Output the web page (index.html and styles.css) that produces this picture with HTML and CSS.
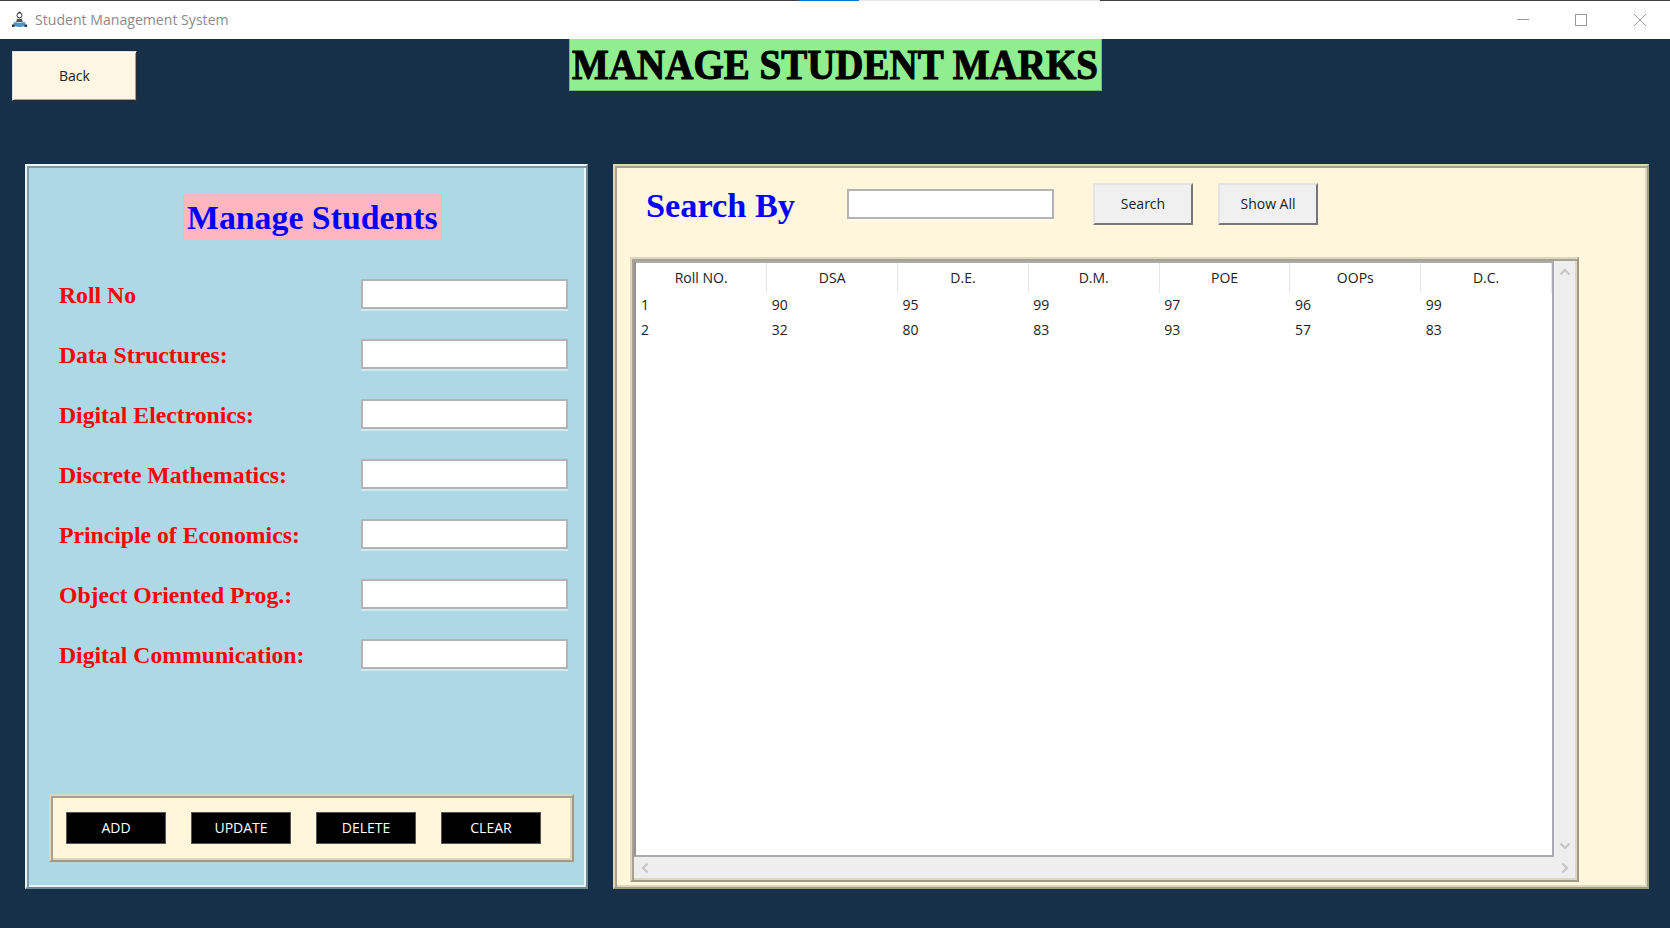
FILE: index.html
```html
<!DOCTYPE html>
<html lang="en">
<head>
    <meta charset="UTF-8">
    <title>Student Management System</title>
    <link rel="stylesheet" href="styles.css">
</head>
<body>
    <div class="topline">
        <span class="topline-blue"></span>
        <span class="topline-grey"></span>
    </div>
    <header class="titlebar">
        <svg class="app-icon" width="15" height="17" viewBox="0 0 18 20">
            <circle cx="9" cy="5" r="3" fill="#fff" stroke="#333" stroke-width="1.2"/>
            <path d="M7 1.6 L9 .4 L11 1.6 L9 2.6 Z" fill="#333"/>
            <path d="M6 9 H12 L13 13 H5 Z" fill="#555"/>
            <path d="M2 13 L9 14 L16 13 V18 L9 19 L2 18 Z" fill="#4d94d0"/>
            <path d="M0 16 H3 V19 H0 Z M15 16 H18 V19 H15 Z" fill="#333"/>
        </svg>
        <span class="app-name">Student Management System</span>
        <div class="win-controls">
            <svg class="win-btn" width="12" height="12" viewBox="0 0 12 12"><path d="M0 5.5 H12" stroke="#999" fill="none"/></svg>
            <svg class="win-btn" width="12" height="12" viewBox="0 0 12 12"><rect x=".5" y=".5" width="11" height="11" stroke="#999" fill="none"/></svg>
            <svg class="win-btn win-close" width="12" height="12" viewBox="0 0 12 12"><path d="M0 0 L12 12 M12 0 L0 12" stroke="#999" fill="none"/></svg>
        </div>
    </header>

    <main class="window">
        <div class="top-row">
            <div class="top-left"><button class="back-btn">Back</button></div>
            <h1 class="page-title"><span>MANAGE STUDENT MARKS</span></h1>
        </div>

        <div class="panels">
            <section class="panel-manage">
                <h2 class="manage-title">Manage Students</h2>
                <form class="marks-form">
                    <div class="form-row"><label for="roll">Roll No</label><input id="roll" type="text"></div>
                    <div class="form-row"><label for="dsa">Data Structures:</label><input id="dsa" type="text"></div>
                    <div class="form-row"><label for="de">Digital Electronics:</label><input id="de" type="text"></div>
                    <div class="form-row"><label for="dm">Discrete Mathematics:</label><input id="dm" type="text"></div>
                    <div class="form-row"><label for="poe">Principle of Economics:</label><input id="poe" type="text"></div>
                    <div class="form-row"><label for="oop">Object Oriented Prog.:</label><input id="oop" type="text"></div>
                    <div class="form-row"><label for="dc">Digital Communication:</label><input id="dc" type="text"></div>
                </form>
                <div class="action-box">
                    <button class="action-btn">ADD</button>
                    <button class="action-btn">UPDATE</button>
                    <button class="action-btn">DELETE</button>
                    <button class="action-btn">CLEAR</button>
                </div>
            </section>

            <section class="panel-list">
                <div class="search-row">
                    <span class="search-label">Search By</span>
                    <input class="search-input" type="text">
                    <button class="search-btn">Search</button>
                    <button class="search-btn show-all">Show All</button>
                </div>
                <div class="table-frame">
                    <div class="tree">
                        <table class="marks-table">
                            <thead>
                                <tr><th>Roll NO.</th><th>DSA</th><th>D.E.</th><th>D.M.</th><th>POE</th><th>OOPs</th><th>D.C.</th></tr>
                            </thead>
                            <tbody>
                                <tr><td>1</td><td>90</td><td>95</td><td>99</td><td>97</td><td>96</td><td>99</td></tr>
                                <tr><td>2</td><td>32</td><td>80</td><td>83</td><td>93</td><td>57</td><td>83</td></tr>
                            </tbody>
                        </table>
                    </div>
                    <div class="vbar">
                        <svg width="12" height="8" viewBox="0 0 12 8"><path d="M1.5 6.5 L6 2 L10.5 6.5" stroke="#c4c4c4" stroke-width="2" fill="none"/></svg>
                        <svg width="12" height="8" viewBox="0 0 12 8"><path d="M1.5 1.5 L6 6 L10.5 1.5" stroke="#c4c4c4" stroke-width="2" fill="none"/></svg>
                    </div>
                    <div class="hbar">
                        <svg width="8" height="12" viewBox="0 0 8 12"><path d="M6.5 1.5 L2 6 L6.5 10.5" stroke="#c4c4c4" stroke-width="2" fill="none"/></svg>
                    </div>
                    <div class="bar-corner">
                        <svg width="8" height="12" viewBox="0 0 8 12"><path d="M1.5 1.5 L6 6 L1.5 10.5" stroke="#c4c4c4" stroke-width="2" fill="none"/></svg>
                    </div>
                </div>
            </section>
        </div>
    </main>
</body>
</html>
```

FILE: styles.css
```css
* {
    box-sizing: border-box;
}

html, body {
    margin: 0;
    height: 100%;
}

body {
    display: flex;
    flex-direction: column;
    width: 1670px;
    height: 928px;
    overflow: hidden;
    background-color: #173049;
    font-family: "Open Sans", "Noto Sans", sans-serif;
}

button {
    font-family: "Open Sans", "Noto Sans", sans-serif;
    font-size: 14px;
    padding: 0 0 2px;
}

/* title bar */
.topline {
    display: flex;
    height: 1px;
    padding-left: 799px;
    background-color: #404040;
}

.topline-blue {
    width: 60px;
    background-color: #0078d7;
}

.topline-grey {
    width: 241px;
    background-color: #e6e6e6;
}

.titlebar {
    display: flex;
    align-items: center;
    height: 38px;
    padding: 0 0 1px 12px;
    background-color: #fff;
}

.app-name {
    margin-left: 8px;
    font-size: 14.1px;
    color: #8b8b8b;
}

.win-controls {
    display: flex;
    gap: 46px;
    margin-left: auto;
    padding-right: 24px;
}

.win-close {
    margin-left: 1px;
}

/* top row */
.window {
    display: flex;
    flex-direction: column;
    flex: 1;
}

.top-row {
    display: grid;
    grid-template-columns: 1fr auto 1fr;
    height: 125px;
}

.top-left {
    padding: 12px 0 0 12px;
}

.back-btn {
    width: 125px;
    height: 50px;
    background-color: #fdf6e3;
    color: #222;
    border: 1px solid;
    border-color: #ddd #2e2e2e #2e2e2e #ddd;
    box-shadow: inset 1px 1px 0 #fff, inset -1px -1px 0 #a5a294;
}

.page-title {
    width: 533px;
    height: 52px;
    margin: 0;
    text-align: center;
    background-color: #90ee90;
    border: 1px solid #6dbd78;
    border-top-width: 0;
    font-family: "Liberation Serif", serif;
    font-size: 39px;
    font-weight: bold;
    line-height: 52px;
    color: #000;
    -webkit-text-stroke: 1px #000;
    white-space: nowrap;
}

.page-title span {
    display: inline-block;
    transform: scaleY(1.06);
}

/* panels */
.panels {
    display: flex;
    gap: 25px;
    height: 725px;
    padding-left: 25px;
}

.panel-manage {
    display: flex;
    flex-direction: column;
    width: 563px;
    background-color: #add8e6;
    border: 2px solid;
    border-color: #e9f6fa #708a94 #708a94 #e9f6fa;
    box-shadow: inset 2px 2px 0 #7f9aa3, inset -2px -2px 0 #e9f6fa;
}

.manage-title {
    align-self: flex-start;
    margin: 28px 0 0 156px;
    padding: 0 4px;
    height: 46px;
    background-color: #ffb6c1;
    font-family: "Liberation Serif", serif;
    font-size: 33.8px;
    font-weight: bold;
    line-height: 48px;
    color: #00f;
    white-space: nowrap;
}

.marks-form {
    display: flex;
    flex-direction: column;
    gap: 30px;
    margin-top: 39px;
    padding: 0 18px 0 32px;
}

.form-row {
    display: flex;
    align-items: center;
    justify-content: space-between;
    height: 30px;
}

.form-row label {
    padding-top: 2px;
    font-family: "Liberation Serif", serif;
    font-size: 23.7px;
    font-weight: bold;
    color: #f00;
}

.form-row input, .search-input {
    width: 207px;
    height: 30px;
    background-color: #fff;
    border: 2px solid #b4b4b4;
    box-shadow: 0 2px 0 rgba(255, 255, 255, .45);
    outline: none;
}

.action-box {
    display: flex;
    gap: 25px;
    height: 68px;
    margin: auto 12px 25px 22px;
    padding: 16px 0 0 15px;
    background-color: #fff6db;
    border: 2px solid;
    border-color: #ddd7bf #a09b87 #a09b87 #ddd7bf;
    box-shadow: inset 2px 2px 0 #a8a390, inset -2px -2px 0 #ddd7bf;
}

.action-btn {
    width: 100px;
    height: 32px;
    background-color: #000;
    color: #fff;
    border: 1px solid #555;
}

.panel-list {
    display: flex;
    flex-direction: column;
    width: 1036px;
    background-color: #fff6db;
    border: 2px solid;
    border-color: #ddd7bf #a09b87 #a09b87 #ddd7bf;
    box-shadow: inset 2px 2px 0 #a8a390, inset -2px -2px 0 #ddd7bf;
}

.search-row {
    display: flex;
    align-items: center;
    height: 46px;
    margin-top: 15px;
    padding-left: 31px;
}

.search-label {
    width: 201px;
    padding-top: 2px;
    font-family: "Liberation Serif", serif;
    font-size: 34.3px;
    font-weight: bold;
    color: #00f;
}

.search-btn {
    width: 100px;
    height: 42px;
    margin-left: 39px;
    background-color: #f0f0f0;
    color: #222;
    border: 2px solid;
    border-color: #e4e4e4 #777 #777 #e4e4e4;
}

.show-all {
    margin-left: 25px;
}

/* table */
.table-frame {
    display: grid;
    grid-template-columns: 920px 21px;
    grid-template-rows: 596px 21px;
    width: 949px;
    height: 625px;
    margin: 30px 0 0 15px;
    background-color: #eee;
    border: 2px solid;
    border-color: #ddd7bf #a09b87 #a09b87 #ddd7bf;
    box-shadow: inset 2px 2px 0 #a8a390, inset -2px -2px 0 #ddd7bf;
    padding: 2px;
}

.tree {
    background-color: #fff;
    border: 2px solid #a9abb0;
    border-left-color: #8f9196;
}

.marks-table {
    width: 916px;
    table-layout: fixed;
    border-collapse: collapse;
    font-size: 14px;
    color: #222;
}

.marks-table th {
    height: 30px;
    padding: 0 0 2px;
    font-weight: normal;
    border-right: 1px solid #e5e5e5;
}

.marks-table td {
    height: 25px;
    padding: 0 0 2px 5px;
}

.vbar {
    display: flex;
    flex-direction: column;
    align-items: center;
    justify-content: space-between;
    padding: 7px 0;
}

.hbar {
    display: flex;
    align-items: center;
    padding: 0 7px;
}

.bar-corner {
    display: flex;
    align-items: center;
    justify-content: center;
}
```
